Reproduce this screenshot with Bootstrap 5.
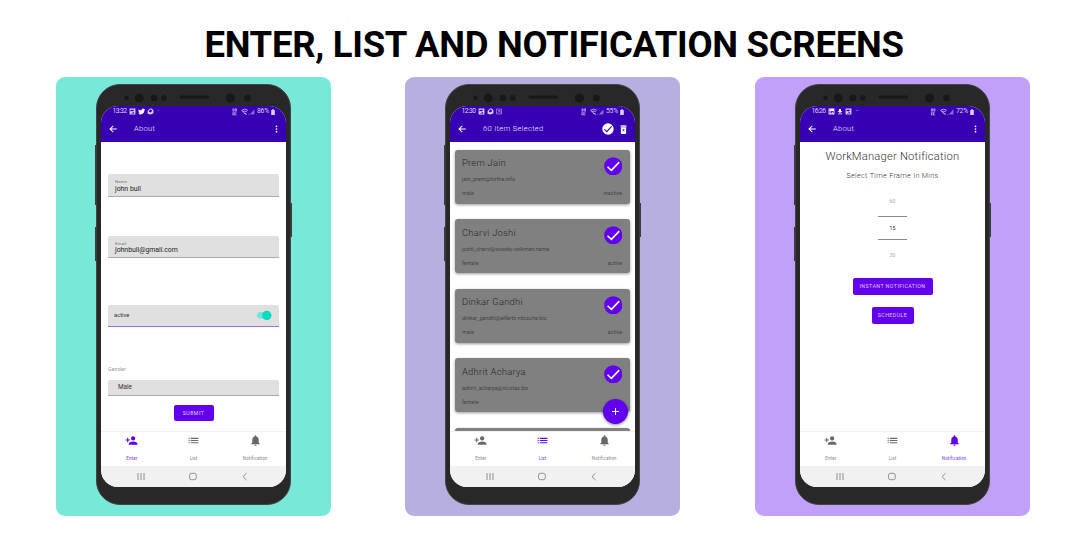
<!DOCTYPE html>
<html lang="en">
<head>
<meta charset="utf-8">
<meta name="viewport" content="width=device-width, initial-scale=1">
<title>Enter, List and Notification Screens</title>
<link href="https://cdn.jsdelivr.net/npm/bootstrap@5.3.0/dist/css/bootstrap.min.css" rel="stylesheet">
<style>
body{font-family:Roboto,"Liberation Sans",sans-serif;width:1085px;height:540px;overflow:hidden;background:#fff;line-height:1}
h1{font-size:36.5px;font-weight:700;line-height:40px;letter-spacing:-.28px;color:#000;padding:25px 0 12px 23px;margin:0;white-space:nowrap}
.stage{padding-left:56px}
.panel{width:275px;height:439px;border-radius:9px;padding:7px 0 0 40px}
.mint{background:#78e9d8}.lilac{background:#b7afe0;margin-left:74px}.violet{background:#c0a0f8;margin-left:75px}
.phone{width:195px;height:421px;background:#282828;border:1px solid #444;border-radius:24px;padding:21px 4px 0}
.sensors{left:0;top:0}
.key{width:2px;background:#3c3c3c}
.k1{left:-2px;top:60px;height:60px}.k2{left:-2px;top:142px;height:34px}.k3{right:-2px;top:118px;height:34px}
.screen{width:185px;height:381px;border-radius:17px;overflow:hidden;background:#fff;font-weight:300;color:#333}
.topbar{background:#3700b3;color:#fff;height:36px}
.status{height:11px;padding:0 11px 0 11.5px;font-size:6.8px;font-weight:400;color:#d9d0f4}
.clock{letter-spacing:-.6px;width:16px}
.pct{letter-spacing:-.2px}
.appbar{height:24px;padding:0 8px 0 7px}
.appbar .ttl{font-size:7.6px;letter-spacing:.3px;font-weight:300;color:#f4f0ff}
.content{height:289px}
.fld{height:22.5px;background:#e0e0e0;border-bottom:1px solid #aaa;border-radius:2px 2px 0 0;padding:5px 7px 0}
.lbl{font-size:4.4px;color:#777;letter-spacing:.1px;font-weight:400;line-height:5px}
.val{font-size:6.9px;color:#222;line-height:9px;font-weight:400;margin-top:.5px}
.form-area{padding:32px 7px 0}
.active-row{height:22px;margin-top:46.5px;border-bottom:1px solid #a070dc;padding:1px 7px 0 6px;font-size:5.8px;font-weight:400}
.gender{font-size:5.3px;line-height:6px;margin-top:39.5px;color:#999;letter-spacing:.15px;font-weight:400}
.sel{height:16px;margin-top:7.5px;padding:1px 10px 0;font-size:6.4px;font-weight:400}
.mbtn{background:#6200ee;color:#e0ccfb;border-radius:2px;height:16.5px;font-size:5.3px;letter-spacing:.42px;font-weight:400;border:0;padding:1px 0 0;line-height:1}
.tabs{height:34.5px;border-top:1px solid #f2f2f2;background:#fff;position:relative}
.tab{color:#686868;width:33.33%;padding-top:1.5px}
.tab svg{height:13px;width:13px}
.tab span{font-size:4.5px;letter-spacing:.1px;font-weight:400;margin-top:9.5px;line-height:6px;opacity:.8}
.tab.on{color:#6200ee}
.sys{height:21.5px;background:#f1f1f1}
.list-area{padding:7.5px 5.5px 0 5px;overflow:hidden;position:relative}
.person{height:54px;margin-bottom:15.6px;background:#808080;border-radius:3px;box-shadow:0 1px 3px #0006;padding:8.5px 7.5px 0 7px;color:#444}
.pname{font-size:9.4px;line-height:10px;letter-spacing:.25px;font-weight:300;color:#282828}
.pmail{font-size:5.5px;line-height:6px;font-weight:400;margin-top:8px;color:#444;letter-spacing:-.03px}
.pmeta{font-size:5.2px;line-height:6px;font-weight:400;margin-top:8px;letter-spacing:.1px}
.tick{margin-top:-1.5px}
.fab{width:25px;height:25px;border-radius:50%;background:#6200ee;right:7px;bottom:7px;box-shadow:0 1px 3px #0007}
.wm{font-size:11.2px;line-height:12px;letter-spacing:.22px;color:#333;margin-top:9px}
.sub{font-size:7.2px;line-height:8px;letter-spacing:.34px;color:#333;margin-top:8.500px;font-weight:300}
.num{font-size:5.2px;line-height:6px;color:#aaa;letter-spacing:.1px;font-weight:400}
.rule{width:29px;height:1px;background:#8b8b8b}
.gap-icon{margin-left:2px}
</style>
</head>
<body>
<svg width="0" height="0" class="position-absolute">
<defs>
<symbol id="back" viewBox="0 0 24 24"><path fill="currentColor" d="M21 10.800H7.800l5.600-5.400L12 3.500 3 12l9 8.500 1.400-1.900-5.600-5.400H21z"/></symbol>
<symbol id="dots" viewBox="0 0 6 24"><g fill="currentColor"><circle cx="3" cy="4" r="2.600"/><circle cx="3" cy="12" r="2.600"/><circle cx="3" cy="20" r="2.600"/></g></symbol>
<symbol id="add" viewBox="0 0 24 24"><path fill="currentColor" d="M15 12a4 4 0 1 0 0-8 4 4 0 0 0 0 8zm-9-2V7H4v3H1v2h3v3h2v-3h3v-2zm9 4c-2.700 0-8 1.300-8 4v2h16v-2c0-2.700-5.300-4-8-4z"/></symbol>
<symbol id="list" viewBox="0 0 24 24"><path fill="currentColor" d="M3 7h2v2H3zm0 4h2v2H3zm0 4h2v2H3zM7 7h14v2H7zm0 4h14v2H7zm0 4h14v2H7z"/></symbol>
<symbol id="bell" viewBox="0 0 24 24"><path fill="currentColor" d="M12 22c1.100 0 2-.9 2-2h-4c0 1.100.9 2 2 2zm6-6v-5c0-3.070-1.640-5.640-4.500-6.320V4a1.500 1.500 0 0 0-3 0v.68C7.630 5.360 6 7.920 6 11v5l-2 2v1h16v-1z"/></symbol>
<symbol id="pic" viewBox="0 0 12 12"><path fill="currentColor" fill-rule="evenodd" d="M1 1h10v10H1zM2.500 3v3l2-1 2 1L9 3.500V3zM3 9.500h6.500L8 7z"/></symbol>
<symbol id="mail" viewBox="0 0 12 12"><path fill="currentColor" fill-rule="evenodd" d="M1 5l4-4h3l3 3v5l-5 2-5-1zm2 1l3 1.500L9 5 7 2.500H5z"/></symbol>
<symbol id="wifi" viewBox="0 0 24 12"><path fill="none" stroke="currentColor" stroke-width="1.300" d="M1 4q5-4 11 0M3 6.500q3.500-2.500 7 0M5 8.500l5 2.500M1 4l8 7M13 11h1"/><path fill="currentColor" opacity=".5" d="M23 2v9h-8z"/></symbol>
<symbol id="batt" viewBox="0 0 6 10"><path fill="currentColor" d="M2 0h2v1.500h2V10H0V1.500h2z"/></symbol>
<symbol id="tick" viewBox="0 0 20 20"><circle cx="10" cy="10" r="9.800" fill="#6200ee"/><path d="M3.800 10.500l4.200 4 8.500-9" fill="none" stroke="#fff" stroke-width="1.700"/></symbol>
<symbol id="sensors" viewBox="0 0 194 20"><g fill="#181818"><circle cx="29.500" cy="14" r="2.200"/><circle cx="42.300" cy="14" r="4.400"/><circle cx="57" cy="14" r="3.300"/><circle cx="66.800" cy="14" r="2.700"/><rect x="82.500" y="11.500" width="29.500" height="3.200" rx="1.600"/><circle cx="133.500" cy="14" r="4.500"/><circle cx="150.500" cy="14" r="3.300"/></g></symbol>
<symbol id="sys" viewBox="0 0 185 21"><g fill="none" stroke="#858585" stroke-width=".9"><path d="M37 7v7M40 7v7M43 7v7M145.500 7.200l-3.500 3.400 3.500 3.400"/><rect x="88.500" y="7.300" width="6.800" height="6.400" rx="2"/></g></symbol>
<symbol id="net" viewBox="0 0 6 10"><g fill="none" stroke="currentColor" stroke-width=".8"><path d="M1 1h1.500v3H1zM4 1h1.500v3H4zM.5 6h5M.5 8.500h5M1 6v2.500M3.500 6v2.500"/></g></symbol>
</defs>
</svg>

<h1 class="text-center">ENTER, LIST AND NOTIFICATION SCREENS</h1>
<main class="stage d-flex">

<section class="panel mint"><div class="phone position-relative">
<svg class="sensors position-absolute" width="193" height="21"><use href="#sensors" width="194" height="20" x="0" y="-1"/></svg>
<i class="key k1 position-absolute"></i><i class="key k2 position-absolute"></i><i class="key k3 position-absolute"></i>
<div class="screen">
<header class="topbar">
<div class="status d-flex align-items-center"><span class="clock">13:32</span>
<svg width="7" height="7"><use href="#pic"/></svg><svg width="7" height="7" viewBox="0 0 12 12" class="gap-icon"><path fill="#fff" d="M1 2q2 2 5 2 0-3 3-3l3 1-1 2q0 6-6 7-3 0-5-1l3-1-2-2z"/></svg><svg width="7" height="7" class="gap-icon"><use href="#mail"/></svg><span class="ms-1">·</span>
<svg width="5" height="8" class="ms-auto"><use href="#net"/></svg><svg width="14" height="7" class="ms-1"><use href="#wifi"/></svg><span class="pct gap-icon">86%</span><svg width="4" height="6" class="gap-icon"><use href="#batt"/></svg></div>
<div class="appbar d-flex align-items-center"><svg width="10" height="10"><use href="#back"/></svg><span class="ttl ps-3">About</span><svg class="ms-auto" width="3" height="8"><use href="#dots"/></svg></div>
</header>
<div class="content form-area">
<div class="fld"><div class="lbl">Name</div><div class="val">john bull</div></div>
<div class="fld" style="margin-top:39.200px"><div class="lbl">Email</div><div class="val">johnbull@gmail.com</div></div>
<div class="fld active-row d-flex align-items-center justify-content-between"><span>active</span><svg width="16" height="11"><rect x="1" y="2" width="12" height="6.500" rx="3.250" fill="#74e6da"/><circle cx="10.800" cy="5.500" r="4.700" fill="#03dac5"/></svg></div>
<div class="gender">Gender</div>
<div class="fld sel d-flex align-items-center">Male</div>
<button class="mbtn d-block mx-auto" style="width:40px;margin-top:9px">SUBMIT</button>
</div>
<nav class="tabs d-flex"><div class="tab on d-flex flex-column align-items-center"><svg><use href="#add"/></svg><span>Enter</span></div><div class="tab d-flex flex-column align-items-center"><svg><use href="#list"/></svg><span>List</span></div><div class="tab d-flex flex-column align-items-center"><svg><use href="#bell"/></svg><span>Notification</span></div></nav>
<svg class="sys d-block" width="185"><use href="#sys" height="21"/></svg>
</div></div></section>

<section class="panel lilac"><div class="phone position-relative">
<svg class="sensors position-absolute" width="193" height="21"><use href="#sensors" width="194" height="20" x="0" y="-1"/></svg>
<i class="key k1 position-absolute"></i><i class="key k2 position-absolute"></i><i class="key k3 position-absolute"></i>
<div class="screen">
<header class="topbar">
<div class="status d-flex align-items-center"><span class="clock">12:30</span>
<svg width="7" height="7"><use href="#pic"/></svg><svg width="7" height="7" class="gap-icon"><use href="#mail"/></svg><svg width="6" height="7" viewBox="0 0 12 12" class="gap-icon"><path fill="none" stroke="currentColor" d="M1 1h10v10H1zM3 9l5-5M4 4h4v5"/></svg>
<svg width="5" height="8" class="ms-auto"><use href="#net"/></svg><svg width="14" height="7" class="ms-1"><use href="#wifi"/></svg><span class="pct gap-icon">55%</span><svg width="4" height="6" class="gap-icon"><use href="#batt"/></svg></div>
<div class="appbar d-flex align-items-center"><svg width="10" height="10"><use href="#back"/></svg><span class="ttl ps-3">60 Item Selected</span>
<svg class="ms-auto" width="12" height="12" viewBox="0 0 20 20"><circle cx="10" cy="10" r="9.500" fill="#fff"/><path d="M4 10.500l4 4 8-9" fill="none" stroke="#3700b3" stroke-width="1.800"/></svg>
<svg width="7" height="9" viewBox="0 0 16 20" style="margin-left:6.500px"><path fill="#fff" fill-rule="evenodd" d="M1 1h4l1-1h4l1 1h4v2.500H1zM2 5h12v13q0 2-2 2H4q-2 0-2-2zm3.500 4L7 11.500 5.500 14H7l1-1.500L9 14h1.500L9 11.500 10.500 9H9l-1 1.500L7 9z"/></svg></div>
</header>
<div class="content list-area">
<div class="person"><div class="d-flex justify-content-between"><div><div class="pname">Prem Jain</div><div class="pmail">jain_prem@hirthe.info</div></div><svg class="tick" width="18.500" height="18.500"><use href="#tick"/></svg></div><div class="pmeta d-flex justify-content-between"><span>male</span><span>inactive</span></div></div>
<div class="person"><div class="d-flex justify-content-between"><div><div class="pname">Charvi Joshi</div><div class="pmail">joshi_charvi@wisoky-volkman.name</div></div><svg class="tick" width="18.500" height="18.500"><use href="#tick"/></svg></div><div class="pmeta d-flex justify-content-between"><span>female</span><span>active</span></div></div>
<div class="person"><div class="d-flex justify-content-between"><div><div class="pname">Dinkar Gandhi</div><div class="pmail">dinkar_gandhi@elfertz-nitzsche.biz</div></div><svg class="tick" width="18.500" height="18.500"><use href="#tick"/></svg></div><div class="pmeta d-flex justify-content-between"><span>male</span><span>active</span></div></div>
<div class="person"><div class="d-flex justify-content-between"><div><div class="pname">Adhrit Acharya</div><div class="pmail">adhrit_acharya@nicolas.biz</div></div><svg class="tick" width="18.500" height="18.500"><use href="#tick"/></svg></div><div class="pmeta">female</div></div>
<div class="person"></div>
<div class="fab position-absolute d-flex align-items-center justify-content-center"><svg width="7" height="7"><path d="M3.500 0v7M0 3.500h7" stroke="#fff" stroke-width="1"/></svg></div>
</div>
<nav class="tabs d-flex"><div class="tab d-flex flex-column align-items-center"><svg><use href="#add"/></svg><span>Enter</span></div><div class="tab on d-flex flex-column align-items-center"><svg><use href="#list"/></svg><span>List</span></div><div class="tab d-flex flex-column align-items-center"><svg><use href="#bell"/></svg><span>Notification</span></div></nav>
<svg class="sys d-block" width="185"><use href="#sys" height="21"/></svg>
</div></div></section>

<section class="panel violet"><div class="phone position-relative">
<svg class="sensors position-absolute" width="193" height="21"><use href="#sensors" width="194" height="20" x="0" y="-1"/></svg>
<i class="key k1 position-absolute"></i><i class="key k2 position-absolute"></i><i class="key k3 position-absolute"></i>
<div class="screen">
<header class="topbar">
<div class="status d-flex align-items-center"><span class="clock">16:26</span>
<svg width="7" height="7" viewBox="0 0 12 12"><path fill="#fff" fill-rule="evenodd" d="M1 1h10v10H1zm1.500 4v4.500H4V5zm0-2.500V4H4V2.500zM5 5v4.500h1.500V6.500H8v3h1.500V5z"/></svg><svg width="6" height="7" viewBox="0 0 12 12" class="gap-icon"><path fill="#fff" d="M4 1h4v4h3L6 9 1 5h3zM2 10h8v1.500H2z"/></svg><svg width="7" height="7" class="gap-icon"><use href="#pic"/></svg><span class="ms-1">··</span>
<svg width="6" height="8" class="ms-auto"><use href="#net"/></svg><svg width="14" height="7" class="ms-1"><use href="#wifi"/></svg><span class="pct gap-icon">72%</span><svg width="4" height="6" class="gap-icon"><use href="#batt"/></svg></div>
<div class="appbar d-flex align-items-center"><svg width="10" height="10"><use href="#back"/></svg><span class="ttl ps-3">About</span><svg class="ms-auto" width="3" height="8"><use href="#dots"/></svg></div>
</header>
<div class="content d-flex flex-column align-items-center">
<div class="wm">WorkManager Notification</div>
<div class="sub">Select Time Frame In Mins</div>
<div class="num" style="margin-top:18.500px">60</div>
<div class="rule" style="margin-top:12px"></div>
<div class="num" style="margin-top:8px;color:#222">15</div>
<div class="rule" style="margin-top:7.500px"></div>
<div class="num" style="margin-top:12.500px">30</div>
<button class="mbtn" style="width:80px;margin-top:20px">INSTANT NOTIFICATION</button>
<button class="mbtn" style="width:42px;margin-top:12.500px">SCHEDULE</button>
</div>
<nav class="tabs d-flex"><div class="tab d-flex flex-column align-items-center"><svg><use href="#add"/></svg><span>Enter</span></div><div class="tab d-flex flex-column align-items-center"><svg><use href="#list"/></svg><span>List</span></div><div class="tab on d-flex flex-column align-items-center"><svg><use href="#bell"/></svg><span>Notification</span></div></nav>
<svg class="sys d-block" width="185"><use href="#sys" height="21"/></svg>
</div></div></section>
</main>
<script src="https://cdn.jsdelivr.net/npm/bootstrap@5.3.0/dist/js/bootstrap.bundle.min.js"></script>
</body>
</html>
